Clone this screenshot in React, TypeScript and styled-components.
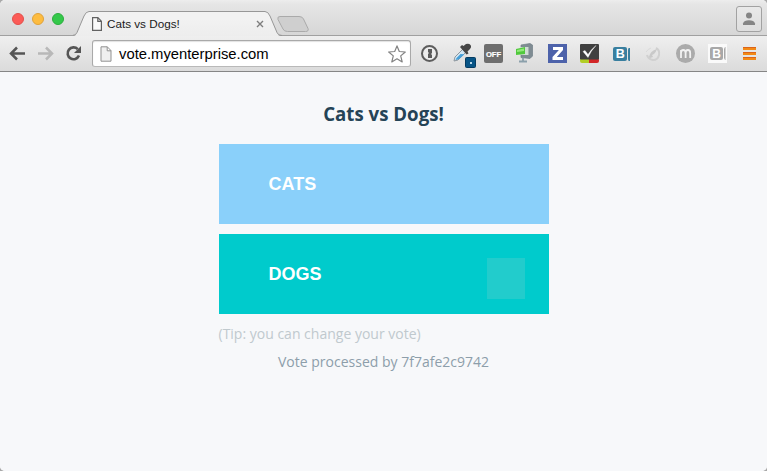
import React from "react";
import styled, { createGlobalStyle } from "styled-components";

const Global = createGlobalStyle`
  * { box-sizing: border-box; }
  html, body { margin: 0; background: #a9a9a9; }
  body { overflow: hidden; }
  svg { display: block; flex: none; }
`;

const Browser = styled.div`
  width: 767px;
  height: 471px;
  display: flex;
  flex-direction: column;
  background: #f7f8fa;
  border-radius: 5px;
  overflow: hidden;
`;

const TabStrip = styled.header`
  height: 36px;
  flex: none;
  display: flex;
  align-items: flex-start;
  background: linear-gradient(#ededed, #e6e6e6 4px, #d6d6d6 35px);
  box-shadow: inset 0 -1px #a0a0a0;
`;

const WindowControls = styled.div`
  display: flex;
  gap: 8px;
  padding: 13px 0 0 12px;
  width: 73px;
`;

const Control = styled.span<{ $fill: string; $edge: string }>`
  width: 12px;
  height: 12px;
  border-radius: 50%;
  background: ${(p) => p.$fill};
  border: 1px solid ${(p) => p.$edge};
`;

const Tab = styled.div`
  position: relative;
  width: 209px;
  height: 36px;
  display: flex;
  align-items: center;
  padding: 12px 18px 0 19px;
`;

const TabShape = styled.svg`
  position: absolute;
  inset: 0;
`;

const TabTitle = styled.span`
  position: relative;
  flex: 1;
  padding-left: 5px;
  font: 11.7px/14px "Liberation Sans", Arial, sans-serif;
  white-space: nowrap;
  color: #1a1a1a;
`;

const TabIcon = styled.svg`
  position: relative;
`;

const NewTab = styled.svg`
  margin: 15px 0 0 -6px;
`;

const ProfileButton = styled.button`
  width: 26px;
  height: 26px;
  margin: 6px 5px 0 auto;
  padding: 0;
  display: grid;
  place-items: center;
  border: 1px solid #a2a2a2;
  border-radius: 3px;
  background: linear-gradient(#e9e9e9, #dedede);
`;

const Toolbar = styled.nav`
  height: 36px;
  flex: none;
  display: flex;
  align-items: flex-start;
  background: linear-gradient(#efefef, #dbdbdb);
  border-bottom: 1px solid #868686;
`;

const NavButtons = styled.div`
  display: flex;
  width: 92px;
  padding-left: 4px;
`;

const AddressBar = styled.div`
  width: 319px;
  height: 27px;
  margin: 4px 3px 0 0;
  padding: 0 4px 0 7px;
  display: flex;
  align-items: center;
  background: #fff;
  border: 1px solid #a9a9a9;
  border-bottom-color: #b9b9b9;
  border-radius: 3px;
  box-shadow: inset 0 1px 1px #e2e2e2;
`;

const Address = styled.span`
  flex: 1;
  padding-left: 7px;
  font: 14.8px/20px "Liberation Sans", Arial, sans-serif;
  color: #000;
`;

const Page = styled.main`
  flex: 1;
  display: flex;
  flex-direction: column;
  align-items: center;
  background: #f7f8fa;
  font-family: "Open Sans", sans-serif;
`;

const Poll = styled.section`
  width: 330px;
  display: flex;
  flex-direction: column;
`;

const Title = styled.h1`
  margin: 29px 0 17px;
  font-size: 18.67px;
  line-height: 26px;
  font-weight: 700;
  text-align: center;
  color: #254356;
`;

const Choice = styled.button<{ $color: string }>`
  height: 80px;
  margin: 0 0 10px;
  padding: 0 24px 0 50px;
  border: 0;
  display: flex;
  align-items: center;
  justify-content: space-between;
  background: ${(p) => p.$color};
  color: #fff;
  font: 700 18px/22px "Liberation Sans", Arial, sans-serif;
`;

const SelectedMark = styled.span`
  width: 38px;
  height: 41px;
  margin-top: 9px;
  background: #22cccc;
`;

const Tip = styled.p`
  margin: 0;
  font-size: 14px;
  line-height: 20px;
  color: #c0c9ce;
`;

const Processed = styled.p`
  margin: 8px 0 0;
  font-size: 14px;
  line-height: 20px;
  text-align: center;
  color: #8d9eaa;
`;

const Slot = ({ w = 32, children }: { w?: number; children: React.ReactNode }) => (
  <svg width={w} height="35" viewBox={`0 0 ${w} 35`} fill="none">
    {children}
  </svg>
);

const BadgeText = styled.text`
  font-family: "Liberation Sans", Arial, sans-serif;
  font-weight: 700;
  text-anchor: middle;
`;

const Extensions = () => (
  <>
    <Slot>
      <circle cx="15.5" cy="17.5" r="7.5" fill="#ededed" stroke="#5d5d5d" strokeWidth="2" />
      <path d="M14 13h4v4l-1 1 1 1v3h-4v-4l1-1-1-1z" fill="#5b5b5b" />
    </Slot>
    <Slot>
      <path d="M8 25l1-4 8-8 3 3-8 8z" fill="#d4e8f5" stroke="#8c969e" />
      <path d="M9.5 24l1-2 4-4 4 .2-5.5 5z" fill="#459fd8" />
      <path d="M14 11l2-2 1.5 1 2.5-2q3-1 4.5 1t-1 4.5l-2 2 1 2-2 1z" fill="#464646" />
      <rect x="19.5" y="21.5" width="10" height="10" rx="1" fill="#075486" stroke="#043b61" />
      <rect x="24" y="26" width="2" height="2" fill="#b9d8e9" />
    </Slot>
    <Slot>
      <rect x="6" y="8" width="19" height="19" rx="2" fill="#6e6e6e" />
      <BadgeText x="15.5" y="20.8" fontSize="7.6" stroke="#fff" strokeWidth=".2" fill="#fff">OFF</BadgeText>
    </Slot>
    <Slot>
      <path d="M11 9l9-1.5 2.5 1.5v11l-2.5 2.5-9-1v-3h7v-7h-7z" fill="#7f8c93" stroke="#707e87" strokeWidth=".7" />
      <path d="M11 11h7.5v8H11z" fill="#d0dcd4" />
      <path d="M6 13l9-2v7l-9 1z" fill="#51c93d" />
      <path d="M7 14l7-1.5v2.5l-7 1z" fill="#91e97a" />
      <path d="M13 22v4M9 25.500h8" stroke="#8ba0ab" strokeWidth="1.8" />
    </Slot>
    <Slot>
      <rect x="6" y="8" width="19" height="19" fill="#4d62aa" />
      <path d="M11 11h10v3l-6.200 7H21v3H10.500v-3l6.400-7H11z" fill="#fff" />
    </Slot>
    <Slot>
      <rect x="6" y="8" width="19" height="16" rx="1" fill="#404040" />
      <path d="M6 23.500h9V27H8q-2 0-2-2z" fill="#b2ce26" />
      <path d="M15 23.500h10V25q0 2-2 2h-8z" fill="#d22627" />
      <path d="M9 15.500l2-1 3 4q3-5 8-9-5 5-8 12z" fill="#fff" stroke="#fff" strokeWidth=".4" />
    </Slot>
    <Slot>
      <rect x="7" y="11" width="14" height="14" rx="2" fill="#397f9f" />
      <path d="M24 12h-1q-1 0-1 2v9q0 2 1 2h1z" fill="#397f9f" />
      <BadgeText x="14.2" y="22.3" fontSize="12.500" fill="#fff">B</BadgeText>
    </Slot>
    <Slot>
      <path d="M18 12q4 2 3 7t-6 5q-5-1-6-5" stroke="#d0d0d0" strokeWidth="2" />
      <path d="M11 21q1-6 8-8-1 3-3 5l-2 1 1 2-3 1z" fill="#c9c9c9" />
      <path d="M8 16q2-3 5-4" stroke="#dadada" />
    </Slot>
    <Slot>
      <circle cx="15.5" cy="17.5" r="9.5" fill="#ababab" />
      <path d="M11 22v-8M11 17q0-3 2.3-3t2.3 3v5m0-5q0-3 2.3-3t2.3 3v5" stroke="#f2f2f2" strokeWidth="1.8" />
    </Slot>
    <Slot>
      <rect x="6" y="8" width="19" height="19" fill="#fafafa" />
      <rect x="8" y="11" width="13" height="13" rx="2" fill="#a8a8a8" />
      <path d="M23.500 11h-.5l-1 2v9l1 2h.5z" fill="#a8a8a8" />
      <BadgeText x="14.5" y="22" fontSize="12" fill="#fff">B</BadgeText>
    </Slot>
    <Slot w={33}>
      {[11, 16, 21].map((y) => (
        <g key={y}>
          <rect x="9" y={y} width="13" height="3" rx=".5" fill="#f28a16" />
          <path d={`M9 ${y + 0.5}h13`} stroke="#dc641a" />
        </g>
      ))}
    </Slot>
  </>
);

export default function App() {
  return (
    <>
      <Global />
      <Browser>
        <TabStrip>
          <WindowControls>
            <Control $fill="#fc5b57" $edge="#e2504b" />
            <Control $fill="#fdbc40" $edge="#dfa23b" />
            <Control $fill="#34c84a" $edge="#2cad3e" />
          </WindowControls>
          <Tab>
            <TabShape width="209" height="36" viewBox="0 0 209 36">
              <defs>
                <linearGradient id="tabFill" x1="0" x2="0" y1="0" y2="1">
                  <stop offset=".3" stopColor="#f2f2f2" />
                  <stop offset="1" stopColor="#ededed" />
                </linearGradient>
              </defs>
              <path d="M0 36q3 0 4-3l7-17q2-4.5 5-4.5h176q3 0 5 4.5l7 17q1 3 3 3z" fill="url(#tabFill)" />
              <path d="M-1 35.5q4 0 5-3l7-16.5q2-4.5 5-4.5h176q3 0 5 4.5l7 16.5q1 3 5 3" fill="none" stroke="#979797" />
            </TabShape>
            <TabIcon width="10" height="14" viewBox="0 0 10 14">
              <path d="M.6.6h5.3l3.5 3.6v9.2H.6zM5.8.6v3.7h3.6" fill="#fafafa" stroke="#626262" strokeWidth="1.2" />
            </TabIcon>
            <TabTitle>Cats vs Dogs!</TabTitle>
            <TabIcon width="8" height="8" viewBox="0 0 8 8">
              <path d="M1 1l6 6M7 1L1 7" stroke="#7d7d7d" strokeWidth="1.4" />
            </TabIcon>
          </Tab>
          <NewTab width="34" height="18" viewBox="0 0 34 18">
            <path
              d="M4 1.500h19q3.500 0 4.500 2.500l4.500 9.500q1 3-2.500 3h-18q-3.500 0-4.500-2.500L2 4.500q-1-3 2-3z"
              fill="#cfcfcf"
              stroke="#aaa"
            />
          </NewTab>
          <ProfileButton aria-label="Profile">
            <svg width="14" height="14" viewBox="0 0 14 14" fill="#858585">
              <circle cx="7" cy="3.5" r="3" />
              <path d="M1 13v-1.5Q2 8.2 7 8.2t6 3.3V13z" />
            </svg>
          </ProfileButton>
        </TabStrip>
        <Toolbar>
          <NavButtons>
            <Slot w={28}>
              <path d="M21 17.5H8M13 11.5l-6 6 6 6" stroke="#555" strokeWidth="2.5" />
            </Slot>
            <Slot w={28}>
              <path d="M6 17.5h13M14 11.5l6 6-6 6" stroke="#b8b8b8" strokeWidth="2.5" />
            </Slot>
            <Slot w={32}>
              <path d="M17.8 13.2a5.9 5.9 0 1 0 1.2 6.4" stroke="#555" strokeWidth="2.6" />
              <path d="M21 10v7h-7z" fill="#555" />
            </Slot>
          </NavButtons>
          <AddressBar>
            <svg width="12" height="16" viewBox="0 0 12 16">
              <path d="M1 .8h6.3L11 4.6v10.6H1zM7.2.8v4H11" fill="#f0f0f0" stroke="#919191" />
            </svg>
            <Address>vote.myenterprise.com</Address>
            <svg width="18" height="18" viewBox="0 0 18 18">
              <path d="M9 .9l2.3 5.600 6 .5-4.600 3.900 1.500 6L9 13.800l-5.200 3.100 1.500-6L.7 7l6-.5z" fill="#fff" stroke="#828282" strokeWidth="1.200" strokeLinejoin="round" />
            </svg>
          </AddressBar>
          <Extensions />
        </Toolbar>
        <Page>
          <Poll>
            <Title>Cats vs Dogs!</Title>
            <Choice $color="#8ad0fa">CATS</Choice>
            <Choice $color="#00cbcc">
              DOGS
              <SelectedMark />
            </Choice>
            <Tip>(Tip: you can change your vote)</Tip>
            <Processed>Vote processed by 7f7afe2c9742</Processed>
          </Poll>
        </Page>
      </Browser>
    </>
  );
}
